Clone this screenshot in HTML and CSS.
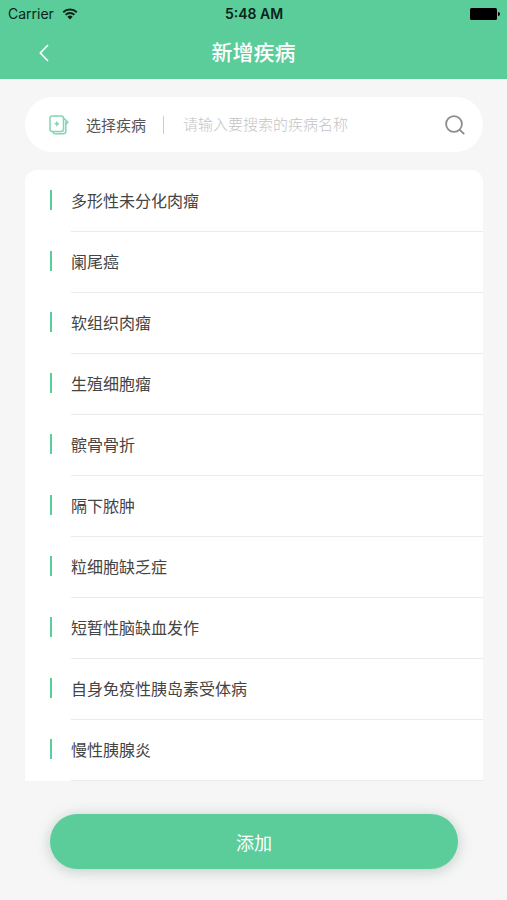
FILE: index.html
```html
<!DOCTYPE html>
<html lang="zh-CN">
<head>
<meta charset="utf-8">
<meta name="viewport" content="width=device-width, initial-scale=1">
<title>新增疾病</title>
<link rel="stylesheet" href="styles.css">
</head>
<body>
<header class="header">
  <div class="status">
    <div class="carrier">
      <span>Carrier</span>
      <svg class="wifi" viewBox="0 0 16 12" aria-hidden="true">
        <path d="M1.2 4.3a9.8 9.8 0 0 1 13.6 0M3.6 6.8a6.3 6.3 0 0 1 8.8 0" fill="none" stroke="currentColor" stroke-width="1.9"/>
        <path d="M5.3 8.7a3.9 3.9 0 0 1 5.4 0L8 11.5z" fill="currentColor"/>
      </svg>
    </div>
    <time class="clock">5:48 AM</time>
    <svg class="battery" viewBox="0 0 30 12" aria-hidden="true">
      <rect width="27" height="12" rx="1.5"/>
      <path d="M28 4a2 2 0 0 1 0 4z"/>
    </svg>
  </div>
  <nav class="nav">
    <button class="back" type="button" aria-label="返回">
      <svg viewBox="0 0 10 18" aria-hidden="true"><path d="M9 1 1.3 9 9 17"/></svg>
    </button>
    <h1 class="title">新增疾病</h1>
  </nav>
</header>
<main class="content">
  <form class="search">
    <svg class="records" viewBox="0 0 20 20" aria-hidden="true">
      <rect x="1" y="1" width="13.5" height="15.5" rx="2.2"/>
      <path d="M4 16.8c.2 1.4 1 2 2.2 2h8c1.7 0 2.6-.9 2.6-2.5V6.6M14.8 3.4l4 3.6-2 2.6"/>
      <path d="M5.6 8.7h4.4M7.8 6.5v4.4"/>
    </svg>
    <label class="search-label" for="disease">选择疾病</label>
    <input class="search-input" id="disease" type="text" placeholder="请输入要搜索的疾病名称">
    <button class="search-button" type="submit" aria-label="搜索">
      <svg viewBox="0 0 20 20" aria-hidden="true"><circle cx="9" cy="9" r="7.9"/><path d="m14.6 14.6 4.6 4.6"/></svg>
    </button>
  </form>
  <ul class="list">
    <li class="item"><span class="name">多形性未分化肉瘤</span></li>
    <li class="item"><span class="name">阑尾癌</span></li>
    <li class="item"><span class="name">软组织肉瘤</span></li>
    <li class="item"><span class="name">生殖细胞瘤</span></li>
    <li class="item"><span class="name">髌骨骨折</span></li>
    <li class="item"><span class="name">隔下脓肿</span></li>
    <li class="item"><span class="name">粒细胞缺乏症</span></li>
    <li class="item"><span class="name">短暂性脑缺血发作</span></li>
    <li class="item"><span class="name">自身免疫性胰岛素受体病</span></li>
    <li class="item"><span class="name">慢性胰腺炎</span></li>
  </ul>
  <button class="add" type="button">添加</button>
</main>
</body>
</html>
```
FILE: styles.css
```css
* {
  box-sizing: border-box;
}

body {
  margin: 0;
  min-height: 100vh;
  background: #f6f6f6;
  color: #444;
  font-family: Inter, "Noto Sans CJK SC", sans-serif;
  font-size: 16px;
}

button,
input {
  font: inherit;
  border: 0;
  padding: 0;
  background: none;
}

svg {
  display: block;
}

.header {
  background: #5acd9a;
}

.status {
  display: grid;
  grid-template-columns: 1fr auto 1fr;
  align-items: center;
  height: 27px;
  padding: 0 7px 0 8px;
  color: #0b2419;
  font-size: 14px;
}

.carrier {
  display: flex;
  align-items: center;
  gap: 8px;
}

.wifi {
  width: 16px;
  height: 12px;
}

.clock {
  font-weight: 600;
}

.battery {
  width: 30px;
  height: 12px;
  justify-self: end;
  fill: #000;
}

.nav {
  display: grid;
  grid-template-columns: 48px 1fr 48px;
  align-items: center;
  height: 52px;
  padding: 0 20px;
  color: #fff;
}

.back {
  display: flex;
  justify-content: center;
  padding: 12px 0;
  color: inherit;
}

.back svg {
  width: 10px;
  height: 18px;
  fill: none;
  stroke: currentColor;
  stroke-width: 1.6;
}

.title {
  margin: 0;
  text-align: center;
  font-size: 21px;
  line-height: 32px;
  font-weight: 500;
}

.content {
  padding: 18px 24px 30px 25px;
}

.search {
  display: flex;
  align-items: center;
  height: 55px;
  padding: 0 18px 0 24px;
  border-radius: 28px;
  background: #fff;
  font-size: 15px;
}

.records {
  flex: none;
  width: 20px;
  height: 20px;
  fill: none;
  stroke: #7fd8b2;
  stroke-width: 1.5;
}

.search-label {
  flex: none;
  margin-left: 17px;
  color: #555;
}

.search-input {
  flex: 1;
  min-width: 0;
  height: 18px;
  margin-left: 17px;
  padding-left: 19px;
  border-left: 1px solid #ccc;
  outline: 0;
}

.search-input::placeholder {
  color: #c4c4c4;
  font-weight: 300;
}

.search-button svg {
  width: 20px;
  height: 20px;
  fill: none;
  stroke: #8c8c8c;
  stroke-width: 1.8;
}

.list {
  margin: 18px 0 0;
  padding: 1px 0 0;
  list-style: none;
  border-radius: 12px 12px 0 0;
  background: #fff;
}

.item {
  display: flex;
  align-items: flex-start;
  gap: 19px;
  height: 61px;
  padding-left: 25px;
}

.item::before {
  content: "";
  width: 2px;
  height: 20px;
  margin-top: 19px;
  background: #5acd9a;
}

.name {
  flex: 1;
  height: 61px;
  line-height: 61px;
  border-bottom: 1px solid #ebebeb;
}

.add {
  display: block;
  width: calc(100% - 50px);
  height: 55px;
  margin: 33px 25px 0;
  border-radius: 28px;
  background: #5acd9a;
  box-shadow: 0 2px 14px rgba(60, 110, 88, 0.3);
  color: #fff;
  font-size: 18px;
}
```
